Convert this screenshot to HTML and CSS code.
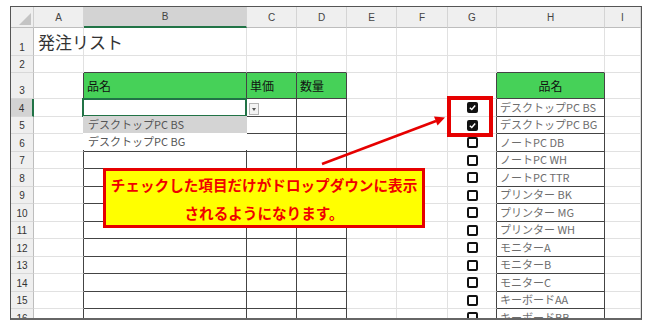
FILE: index.html
```html
<!DOCTYPE html>
<html>
<head>
<meta charset="utf-8">
<link rel="stylesheet" href="styles.css">
<title>発注リスト</title>
</head>
<body>
  <div class="sheet">
    <!-- column headers -->
    <div class="c corner"></div>
    <div class="c ch">A</div>
    <div class="c ch sel">B</div>
    <div class="c ch">C</div>
    <div class="c ch">D</div>
    <div class="c ch">E</div>
    <div class="c ch">F</div>
    <div class="c ch">G</div>
    <div class="c ch">H</div>
    <div class="c ch">I</div>
    <!-- 1 -->
    <div class="c rh">1</div>
    <div class="c title">発注リスト</div>
    <div class="c"></div><div class="c"></div><div class="c"></div><div class="c"></div><div class="c"></div><div class="c"></div><div class="c"></div><div class="c"></div>
    <!-- 2 -->
    <div class="c rh">2</div>
    <div class="c"></div>
    <div class="c tt"></div><div class="c tt"></div><div class="c tt"></div>
    <div class="c"></div><div class="c"></div><div class="c"></div>
    <div class="c tt"></div>
    <div class="c"></div>
    <!-- 3 -->
    <div class="c rh">3</div>
    <div class="c tl"></div>
    <div class="c tb gh">品名</div>
    <div class="c tb gh">単価</div>
    <div class="c tb gh">数量</div>
    <div class="c"></div><div class="c"></div>
    <div class="c tl"></div>
    <div class="c tb gh center">品名</div>
    <div class="c"></div>
    <!-- 4 -->
    <div class="c rh sel">4</div>
    <div class="c tl"></div>
    <div class="c tb act">
      <span class="dd-btn"></span>
      <div class="dd-list">
        <div class="dd-item hl">デスクトップPC BS</div>
        <div class="dd-item">デスクトップPC BG</div>
      </div>
    </div>
    <div class="c tb"></div><div class="c tb"></div>
    <div class="c"></div><div class="c"></div>
    <div class="c tl mid"><span class="cb on"><svg viewBox="0 0 10 10"><path d="M2 5.2 L4.2 7.3 L8 2.8"/></svg></span></div>
    <div class="c tb item">デスクトップPC BS</div>
    <div class="c"></div>
    <!-- 5 -->
    <div class="c rh">5</div>
    <div class="c tl"></div>
    <div class="c tb"></div><div class="c tb"></div><div class="c tb"></div>
    <div class="c"></div><div class="c"></div>
    <div class="c tl mid"><span class="cb on"><svg viewBox="0 0 10 10"><path d="M2 5.2 L4.2 7.3 L8 2.8"/></svg></span></div>
    <div class="c tb item">デスクトップPC BG</div>
    <div class="c"></div>
    <!-- 6 -->
    <div class="c rh">6</div>
    <div class="c tl"></div>
    <div class="c tb"></div><div class="c tb"></div><div class="c tb"></div>
    <div class="c"></div><div class="c"></div>
    <div class="c tl mid"><span class="cb"></span></div>
    <div class="c tb item">ノートPC DB</div>
    <div class="c"></div>
    <!-- 7 -->
    <div class="c rh">7</div>
    <div class="c tl"></div>
    <div class="c tb"></div><div class="c tb"></div><div class="c tb"></div>
    <div class="c"></div><div class="c"></div>
    <div class="c tl mid"><span class="cb"></span></div>
    <div class="c tb item">ノートPC WH</div>
    <div class="c"></div>
    <!-- 8 -->
    <div class="c rh">8</div>
    <div class="c tl"></div>
    <div class="c tb"></div><div class="c tb"></div><div class="c tb"></div>
    <div class="c"></div><div class="c"></div>
    <div class="c tl mid"><span class="cb"></span></div>
    <div class="c tb item">ノートPC TTR</div>
    <div class="c"></div>
    <!-- 9 -->
    <div class="c rh">9</div>
    <div class="c tl"></div>
    <div class="c tb"></div><div class="c tb"></div><div class="c tb"></div>
    <div class="c"></div><div class="c"></div>
    <div class="c tl mid"><span class="cb"></span></div>
    <div class="c tb item">プリンター BK</div>
    <div class="c"></div>
    <!-- 10 -->
    <div class="c rh">10</div>
    <div class="c tl"></div>
    <div class="c tb"></div><div class="c tb"></div><div class="c tb"></div>
    <div class="c"></div><div class="c"></div>
    <div class="c tl mid"><span class="cb"></span></div>
    <div class="c tb item">プリンター MG</div>
    <div class="c"></div>
    <!-- 11 -->
    <div class="c rh">11</div>
    <div class="c tl"></div>
    <div class="c tb"></div><div class="c tb"></div><div class="c tb"></div>
    <div class="c"></div><div class="c"></div>
    <div class="c tl mid"><span class="cb"></span></div>
    <div class="c tb item">プリンター WH</div>
    <div class="c"></div>
    <!-- 12 -->
    <div class="c rh">12</div>
    <div class="c tl"></div>
    <div class="c tb"></div><div class="c tb"></div><div class="c tb"></div>
    <div class="c"></div><div class="c"></div>
    <div class="c tl mid"><span class="cb"></span></div>
    <div class="c tb item">モニターA</div>
    <div class="c"></div>
    <!-- 13 -->
    <div class="c rh">13</div>
    <div class="c tl"></div>
    <div class="c tb"></div><div class="c tb"></div><div class="c tb"></div>
    <div class="c"></div><div class="c"></div>
    <div class="c tl mid"><span class="cb"></span></div>
    <div class="c tb item">モニターB</div>
    <div class="c"></div>
    <!-- 14 -->
    <div class="c rh">14</div>
    <div class="c tl"></div>
    <div class="c tb"></div><div class="c tb"></div><div class="c tb"></div>
    <div class="c"></div><div class="c"></div>
    <div class="c tl mid"><span class="cb"></span></div>
    <div class="c tb item">モニターC</div>
    <div class="c"></div>
    <!-- 15 -->
    <div class="c rh">15</div>
    <div class="c tl"></div>
    <div class="c tb"></div><div class="c tb"></div><div class="c tb"></div>
    <div class="c"></div><div class="c"></div>
    <div class="c tl mid"><span class="cb"></span></div>
    <div class="c tb item">キーボードAA</div>
    <div class="c"></div>
    <!-- 16 -->
    <div class="c rh">16</div>
    <div class="c tl"></div>
    <div class="c tb"></div><div class="c tb"></div><div class="c tb"></div>
    <div class="c"></div><div class="c"></div>
    <div class="c tl mid"><span class="cb"></span></div>
    <div class="c tb item">キーボードBB</div>
    <div class="c"></div>

    <!-- annotations -->
    <div class="mark"></div>
    <svg class="arrow" width="630" height="311" viewBox="0 0 630 311">
      <line x1="311" y1="157" x2="425" y2="114"/>
      <polygon points="434,110.5 426.5,118.5 423,109.5"/>
    </svg>
    <div class="callout">
      <p>チェックした項目だけがドロップダウンに表示</p>
      <p>されるようになります。</p>
    </div>
  </div>
</body>
</html>
```

FILE: styles.css
```css
body {
  margin: 0;
  background: #fff;
  font-family: "Noto Sans CJK JP", "Liberation Sans", sans-serif;
}

.sheet {
  position: relative;
  margin: 6px 0 0 10px;
  width: 630px;
  height: 311px;
  border: 1px solid #555;
  border-bottom: 2px solid #666;
  overflow: hidden;
  display: grid;
  grid-template-columns: 23px 50px 163px 50px 50px 50px 51px 49px 108px 36px;
  grid-template-rows: 21px 28px 17px 26px repeat(6, 18px 17px) 18px;
}

.c {
  box-sizing: border-box;
  border-right: 1px solid #e1e1e1;
  border-bottom: 1px solid #e1e1e1;
  display: flex;
  align-items: flex-end;
  min-width: 0;
  white-space: nowrap;
  font-size: 12px;
  color: #111;
  padding: 0 0 2px 3px;
}

/* headers */
.corner {
  position: relative;
  background: #efefef;
  border-right-color: #cfcfcf;
  border-bottom-color: #bdbdbd;
}
.corner::after {
  content: "";
  position: absolute;
  right: 2px;
  bottom: 2px;
  width: 12px;
  height: 12px;
  background: #c4c4c4;
  clip-path: polygon(100% 0, 100% 100%, 0 100%);
}

.ch {
  background: #efefef;
  border-right-color: #d4d4d4;
  border-bottom-color: #bdbdbd;
  align-items: center;
  justify-content: center;
  padding: 0;
  font-family: "Liberation Sans", sans-serif;
  font-size: 10px;
  color: #444;
}
.ch.sel {
  background: #d3d3d3;
  border-bottom: 2px solid #217346;
}

.rh {
  background: #efefef;
  border-right-color: #bdbdbd;
  border-bottom-color: #d8d8d8;
  justify-content: center;
  padding: 0 0 2px 0;
  font-family: "Liberation Sans", sans-serif;
  font-size: 10px;
  color: #333;
}
.rh.sel {
  background: #d3d3d3;
  border-right: 2px solid #217346;
}

.title {
  font-size: 17px;
  color: #333;
  align-items: center;
  padding: 0 0 1px 4px;
  overflow: visible;
}

/* table borders */
.tt { border-bottom-color: #444; }
.tl { border-right-color: #444; }
.tb {
  border-right-color: #444;
  border-bottom-color: #444;
}

.gh {
  background: #46d158;
  padding-bottom: 4px;
}
.center { justify-content: center; padding-left: 0; }

.item {
  font-size: 11px;
  color: #6d6d6d;
  padding-bottom: 1px;
}

/* active cell with dropdown */
.act {
  position: relative;
}
.act::after {
  content: "";
  position: absolute;
  left: -2px;
  top: -1px;
  right: -1px;
  bottom: -1px;
  border: 2px solid #217346;
}
.dd-btn {
  position: absolute;
  right: -13px;
  top: 4px;
  width: 10px;
  height: 12px;
  box-sizing: border-box;
  border: 1px solid #b5b5b5;
  background: #f4f4f4;
  z-index: 2;
}
.dd-btn::after {
  content: "";
  position: absolute;
  left: 2px;
  top: 4px;
  border-left: 2px solid transparent;
  border-right: 2px solid transparent;
  border-top: 3px solid #555;
}
.dd-list {
  position: absolute;
  left: -1px;
  top: 17px;
  width: 164px;
  background: #fff;
  z-index: 2;
}
.dd-item {
  height: 17px;
  box-sizing: border-box;
  padding: 1px 0 0 5px;
  font-size: 11px;
  color: #555;
  line-height: 15px;
}
.dd-item.hl { background: #d4d4d4; }

/* checkboxes */
.mid {
  align-items: center;
  justify-content: center;
  padding: 0;
}
.cb {
  box-sizing: border-box;
  width: 11px;
  height: 11px;
  border: 2px solid #111;
  border-radius: 2px;
  background: #fff;
  display: flex;
}
.cb.on {
  background: #111;
  border-color: #111;
}
.cb svg {
  width: 9px;
  height: 9px;
  margin: -1px;
}
.cb path {
  fill: none;
  stroke: #fff;
  stroke-width: 1.6;
}

/* annotations */
.mark {
  position: absolute;
  left: 436px;
  top: 89px;
  width: 46px;
  height: 41px;
  box-sizing: border-box;
  border: 4px solid #e60000;
  z-index: 3;
}
.arrow {
  position: absolute;
  left: 0;
  top: 0;
  z-index: 3;
}
.arrow line {
  stroke: #e60000;
  stroke-width: 2.5;
}
.arrow polygon {
  fill: #e60000;
}
.callout {
  position: absolute;
  left: 92px;
  top: 161px;
  width: 322px;
  height: 60px;
  box-sizing: border-box;
  border: 3px solid #e60000;
  background: #ffff00;
  z-index: 3;
}
.callout p {
  margin: 0;
  text-align: center;
  font-size: 14.6px;
  font-weight: bold;
  line-height: 28px;
  color: #f00000;
}
```
